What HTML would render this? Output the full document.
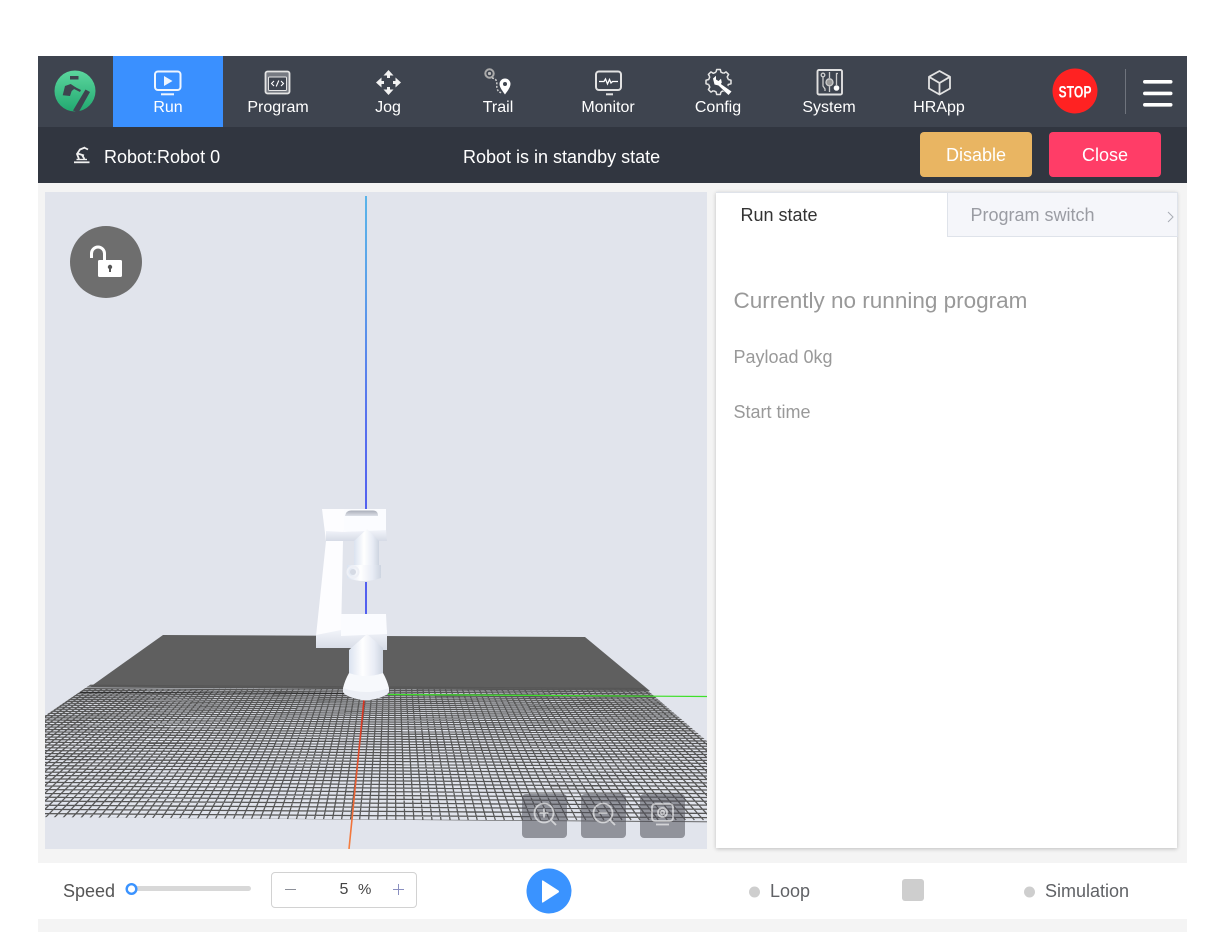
<!DOCTYPE html>
<html lang="en">
<head>
<meta charset="utf-8">
<title>Robot Run</title>
<style>
html,body{margin:0;padding:0;width:1208px;height:932px;overflow:hidden;background:#fff;font-family:"Liberation Sans",Arial,sans-serif}
.a{position:absolute}
.t{position:absolute;white-space:nowrap;line-height:24px;height:24px}
.nav{position:absolute;top:97.500px;width:110px;text-align:center;color:#fff;font-size:16px;line-height:20px}
svg{position:absolute;left:0;top:0}
</style>
</head>
<body>
<div class="a" style="left:38px;top:56px;width:1149px;height:876px;background:#f4f4f4"></div>
<div class="a" style="left:38px;top:56px;width:1149px;height:71px;background:#3e444f"></div>
<div class="a" style="left:113px;top:56px;width:110px;height:71px;background:#3a90ff"></div>
<div class="a" style="left:38px;top:127px;width:1149px;height:56px;background:#313640"></div>
<div class="a" style="left:45px;top:192px;width:662px;height:657px;background:#e1e4ec"></div>
<div class="a" style="left:716px;top:192px;width:461px;height:656px;background:#fff;box-shadow:0 1px 4px rgba(0,0,0,.22)"></div>
<div class="a" style="left:947px;top:192px;width:229px;height:43px;background:#f5f6fa;border:1px solid #dfe3ea"></div>
<div class="a" style="left:716px;top:192px;width:231px;height:1px;background:#dfe3ea"></div>
<div class="a" style="left:38px;top:863px;width:1149px;height:56px;background:#fff"></div>
<div class="a" style="left:920px;top:132px;width:112px;height:45px;border-radius:4px;background:#e9b562;color:#fff;font-size:18px;line-height:46px;text-align:center">Disable</div>
<div class="a" style="left:1049px;top:132px;width:112px;height:45px;border-radius:4px;background:#ff3d67;color:#fff;font-size:18px;line-height:46px;text-align:center">Close</div>
<div class="a" style="left:271px;top:872px;width:144px;height:34px;border:1px solid #d2d2d2;border-radius:4px"></div>

<svg width="1208" height="932" viewBox="0 0 1208 932" xmlns="http://www.w3.org/2000/svg">
<defs>
<clipPath id="view"><rect x="45" y="192" width="662" height="657"/></clipPath>
<clipPath id="floor"><polygon points="163,635 585,637 803,823 -102,816"/></clipPath>
<linearGradient id="zax" x1="0" y1="196" x2="0" y2="510" gradientUnits="userSpaceOnUse"><stop offset="0" stop-color="#38a8e8"/><stop offset=".3" stop-color="#3a8ee8"/><stop offset=".7" stop-color="#3555ee"/><stop offset="1" stop-color="#2f3ff0"/></linearGradient>
<linearGradient id="xax" x1="0" y1="700" x2="0" y2="849" gradientUnits="userSpaceOnUse"><stop offset="0" stop-color="#d83020"/><stop offset="1" stop-color="#f58040"/></linearGradient>
<linearGradient id="cyl" x1="0" x2="1" y1="0" y2="0"><stop offset="0" stop-color="#dbe3f0"/><stop offset=".4" stop-color="#fff"/><stop offset=".75" stop-color="#e8ecf5"/><stop offset="1" stop-color="#cdd4e0"/></linearGradient>
<linearGradient id="shade" x1="0" x2="0" y1="0" y2="1"><stop offset="0" stop-color="#f2f4fa"/><stop offset="1" stop-color="#d6dbe6"/></linearGradient>
<linearGradient id="hole" x1="0" x2="0" y1="0" y2="1"><stop offset="0" stop-color="#a9adb8"/><stop offset="1" stop-color="#dde0e8"/></linearGradient>
<linearGradient id="logo" x1="0" x2="0" y1="0" y2="1"><stop offset="0" stop-color="#5cd69e"/><stop offset="1" stop-color="#22a970"/></linearGradient>
<path id="tooth" d="M-2.500 -9.800L-1.800 -12.500H1.800L2.500 -9.800L5.160 -8.700" fill="none" stroke="#e6e6e6" stroke-width="1.500" stroke-linejoin="round"/>
</defs>

<!-- 3D scene -->
<g clip-path="url(#view)">
<line x1="366" y1="196" x2="366" y2="510" stroke="url(#zax)" stroke-width="1.6"/>
<polygon points="163,635 585,637 650,691 90,687" fill="#5f5f5f"/>
<g clip-path="url(#floor)"><path id="grid" fill="none" stroke="#565656" stroke-width="1.250" d=""/></g>
<path d="M80 692.500L345 693.500" stroke="#2e2e2e" stroke-width="1"/>
<path d="M388 694.500L707 696.500" stroke="#3fe02a" stroke-width="1.200"/>
<path d="M364 700L349 849" stroke="url(#xax)" stroke-width="1.600"/>
<line x1="366" y1="582" x2="366" y2="614" stroke="#2f3ff0" stroke-width="1.600"/>
<!-- robot: rear link -->
<polygon points="322,509 346,509 343,541 341,636 316,636 326,541" fill="#fdfdff"/>
<polygon points="316,635 341,630 352,630 387,630 387,650 383,650 349,648 316,648" fill="url(#shade)"/>
<polygon points="341,614 386,614 387,634 341,636" fill="#fbfcff"/>
<!-- head -->
<polygon points="344,509 386,509 386,531 344,532" fill="#fbfcff"/>
<polygon points="326,531 344,532 386,530 387,541 326,541" fill="url(#shade)"/>
<path d="M345 516Q346 510.500 351 510.500H373Q378 510.500 378 516Z" fill="url(#hole)"/>
<polygon points="354,541 367,529 379,541 379,567 354,567" fill="url(#cyl)"/>
<path d="M347 565H381V578Q364 584 347 578Z" fill="url(#cyl)"/>
<circle cx="353" cy="572" r="3" fill="#d5dae4"/>
<circle cx="353" cy="572" r="5.500" fill="none" stroke="#eef0f6" stroke-width="2"/>
<!-- base -->
<polygon points="349,650 367,634 383,648 383,682 349,682" fill="url(#cyl)"/>
<path d="M349 673Q366 679 383 673Q387 680 389 688V692Q385 698 366 700.500Q347 698 343 692V688Q345 680 349 673Z" fill="#f7f9fc"/>
<path d="M343 688Q366 696 389 688V692Q385 698 366 700.500Q347 698 343 692Z" fill="#eceff5"/>
</g>

<!-- view buttons -->
<rect x="522" y="794" width="45" height="44" rx="4" fill="#50505a" fill-opacity=".55"/>
<rect x="581" y="794" width="45" height="44" rx="4" fill="#50505a" fill-opacity=".55"/>
<rect x="640" y="794" width="45" height="44" rx="4" fill="#50505a" fill-opacity=".55"/>
<g fill="none" stroke="#fff" stroke-opacity=".6" stroke-width="1.800">
<circle cx="544" cy="813" r="9.500"/><path d="M551 820L556 825M539.500 813H548.500M544 808.500V817.500"/>
<circle cx="603" cy="813" r="9.500"/><path d="M610 820L615 825M598.500 813H607.500"/>
<rect x="652" y="804" width="21" height="17" rx="3"/><circle cx="662.500" cy="812.500" r="4.500"/><circle cx="662.500" cy="812.500" r="1.800"/><path d="M656 824.500H669"/>
</g>

<!-- lock -->
<circle cx="106" cy="262" r="36" fill="#6e6e6e"/>
<path d="M91.500 258V253.500A6.500 6.500 0 0 1 104.500 253.500V260" fill="none" stroke="#fff" stroke-width="3"/>
<rect x="98" y="260" width="24" height="17" rx="1.500" fill="#fff"/>
<circle cx="110" cy="267" r="2.200" fill="#555"/><rect x="109" y="267" width="2" height="5" fill="#555"/>

<!-- logo -->
<circle cx="75" cy="91" r="20.500" fill="url(#logo)"/>
<path d="M70 76H78.500V79.500H70Z" fill="#3e444f"/>
<path d="M65 86L70.700 84L76 87.500L71.700 91L70 96L62.700 95.300Z" fill="#3e444f"/>
<path d="M75 87L81 90L80 92L74 89Z" fill="#3e444f"/>
<path d="M85.500 89.500L90 92L78.500 112.500L73 110.500Z" fill="#3e444f"/>

<!-- Run -->
<g fill="none" stroke="#eef5ff" stroke-width="2">
<rect x="155" y="71.500" width="25.500" height="18.500" rx="3"/>
<path d="M161 94.300H174"/>
</g>
<path d="M164 76L172.500 81L164 86Z" fill="#eef5ff"/>

<!-- Program -->
<rect x="265.500" y="71.500" width="24" height="22" rx="2" fill="#767a82" stroke="#e4e4e4" stroke-width="1.800"/>
<rect x="268.500" y="77" width="18" height="13.500" rx="1" fill="#3e444f" stroke="#e4e4e4" stroke-width="1"/>
<path d="M274 81L271.500 83.500L274 86M281 81L283.500 83.500L281 86M278.800 80.500L276.200 86.500" fill="none" stroke="#fff" stroke-width="1.100"/>

<!-- Jog -->
<g fill="#f2f2f2">
<path d="M388.500 70L393.500 75.500H383.500Z"/><path d="M388.500 95L393.500 89.500H383.500Z"/>
<path d="M376 82.500L381.500 77.500V87.500Z"/><path d="M401 82.500L395.500 77.500V87.500Z"/>
<rect x="387" y="75" width="3" height="3"/><rect x="387" y="87" width="3" height="3"/>
<rect x="381" y="81" width="3" height="3"/><rect x="393" y="81" width="3" height="3"/>
</g>

<!-- Trail -->
<circle cx="489.500" cy="73.500" r="4.200" fill="none" stroke="#aaa" stroke-width="2"/>
<circle cx="489.500" cy="73.500" r="1.600" fill="#bbb"/>
<path d="M492 78C499 79 496 85 497 88C498 92 499 92 502 93" fill="none" stroke="#ccc" stroke-width="1.500" stroke-dasharray="2 1.500"/>
<path d="M505 78.500A5.500 5.500 0 0 1 510.500 84C510.500 87.500 507 91.500 505 94.500C503 91.500 499.500 87.500 499.500 84A5.500 5.500 0 0 1 505 78.500Z" fill="#fff"/>
<circle cx="505" cy="84" r="2" fill="#3e444f"/>

<!-- Monitor -->
<g fill="none" stroke="#e2e2e2" stroke-width="2">
<rect x="596" y="71.500" width="25" height="18.500" rx="3"/>
<path d="M606 94.300H613"/>
</g>
<path d="M599 81.500H604L605.500 79L607.500 84L609.500 79.500L611 83L612.500 81.500H618" fill="none" stroke="#fff" stroke-width="1.300"/>

<!-- Config -->
<g transform="translate(718.500 82)">
<use href="#tooth"/><use href="#tooth" transform="rotate(45)"/><use href="#tooth" transform="rotate(90)"/><use href="#tooth" transform="rotate(135)"/><use href="#tooth" transform="rotate(180)"/><use href="#tooth" transform="rotate(225)"/><use href="#tooth" transform="rotate(270)"/><use href="#tooth" transform="rotate(315)"/>
</g>
<path d="M719 82L731 93.500" stroke="#3e444f" stroke-width="6.500"/>
<path d="M713 78.500L716 75.800L716 79.500L718.500 81L721 78.800L721.800 82.500L720.800 84L731.500 91.500L728.500 95L718.500 85.500L714.500 84.500Z" fill="#fff"/>

<!-- System -->
<rect x="817.500" y="70" width="24.500" height="24.500" rx="1.500" fill="#3e444f" stroke="#e0e0e0" stroke-width="1.900"/>
<g fill="none" stroke="#ccc" stroke-width="1.300">
<circle cx="823" cy="75" r="1.800"/><path d="M823 77V86L825 89V91"/>
<path d="M829.500 72V78M829.500 86.500V92"/><circle cx="829.500" cy="82.300" r="3.500" fill="#999"/>
<path d="M838 73.500H836.500V85"/>
</g>
<circle cx="836.500" cy="88" r="2.800" fill="#fff"/>

<!-- HRApp -->
<path d="M939.500 71L950 76.800V88.500L939.500 94.500L929 88.500V76.800ZM929 76.800L939.500 83L950 76.800M939.500 83V94.500" fill="none" stroke="#e2e2e2" stroke-width="1.800" stroke-linejoin="round"/>

<!-- Stop -->
<circle cx="1075" cy="91" r="22.500" fill="#ff2222"/>
<text x="1075" y="97.500" text-anchor="middle" font-family="'Liberation Sans',sans-serif" font-size="17" font-weight="700" fill="#fff" textLength="33" lengthAdjust="spacingAndGlyphs">STOP</text>
<rect x="1125" y="69" width="1" height="45" fill="#6f747d"/>
<rect x="1143" y="80" width="29.500" height="3.600" rx="1.800" fill="#fff"/>
<rect x="1143" y="91.600" width="29.500" height="3.600" rx="1.800" fill="#fff"/>
<rect x="1143" y="103" width="29.500" height="3.600" rx="1.800" fill="#fff"/>

<!-- robot glyph -->
<g fill="none" stroke="#f0f0f0" stroke-width="1.800">
<path d="M74 162.300H89.500"/>
<path d="M76.500 159.500H87" stroke-width="1.400"/>
<path d="M79 159L77 154L80 149.500L85 147.500M82 155L84.500 159M77.500 153.500L84 155.500"/>
<path d="M84 147.500L88 149.500"/>
</g>

<!-- tab chevron -->
<path d="M1168 212L1173 217L1168 222" fill="none" stroke="#a8acb4" stroke-width="1"/>

<!-- speed -->
<rect x="131" y="886" width="120" height="5" rx="2.500" fill="#d8d8d8"/>
<circle cx="131.500" cy="889" r="4.800" fill="#fff" stroke="#3a93ff" stroke-width="2.400"/>
<path d="M285 889.500H296" stroke="#8d9099" stroke-width="1"/>
<path d="M393 889.500H404M398.500 884V895" stroke="#8a8fc0" stroke-width="1"/>

<!-- play -->
<circle cx="549" cy="891" r="22.500" fill="#3a93ff"/>
<path d="M543 880.500L558.500 890.500Q559.500 891.500 558.500 892.500L543 902.500Q542 903 542 902V881Q542 880 543 880.500Z" fill="#fff"/>

<circle cx="754.500" cy="892" r="5.500" fill="#cecece"/>
<rect x="902" y="879" width="22" height="22" rx="3" fill="#cecece"/>
<circle cx="1029.500" cy="892" r="5.500" fill="#cecece"/>
</svg>

<div class="nav" style="left:113px">Run</div>
<div class="nav" style="left:223px">Program</div>
<div class="nav" style="left:333px">Jog</div>
<div class="nav" style="left:443px">Trail</div>
<div class="nav" style="left:553px">Monitor</div>
<div class="nav" style="left:663px">Config</div>
<div class="nav" style="left:774px">System</div>
<div class="nav" style="left:884px">HRApp</div>

<div class="t" style="left:104px;top:145px;color:#fff;font-size:18px">Robot:Robot 0</div>
<div class="t" style="left:463px;top:145px;color:#fff;font-size:18px">Robot is in standby state</div>

<div class="t" style="left:740.500px;top:203px;color:#333;font-size:18px">Run state</div>
<div class="t" style="left:970.500px;top:203px;color:#9a9ca3;font-size:18px">Program switch</div>
<div class="t" style="left:733.500px;top:289px;color:#999;font-size:22.500px">Currently no running program</div>
<div class="t" style="left:733.500px;top:345px;color:#999;font-size:18px">Payload 0kg</div>
<div class="t" style="left:733.500px;top:400px;color:#999;font-size:18px">Start time</div>

<div class="t" style="left:63px;top:879px;color:#555;font-size:18px">Speed</div>
<div class="t" style="left:339.500px;top:877.500px;color:#444;font-size:16px">5</div>
<div class="t" style="left:358px;top:877.500px;color:#444;font-size:15px">%</div>
<div class="t" style="left:770px;top:879px;color:#606266;font-size:18px">Loop</div>
<div class="t" style="left:1045px;top:879px;color:#606266;font-size:18px">Simulation</div>

<script>
(function(){
var vx=393,vy=473,d='',i,k=(689-473)/347;
for(i=0;i<=100;i++){var xb=-102+9.05*i;d+='M'+(vx+(xb-vx)*k).toFixed(1)+' 689L'+xb.toFixed(1)+' 820';}
var a=1/162,b=1/347,n=90;
for(i=0;i<=n;i++){
  var y=vy+1/(a-(a-b)*i/n);
  if(y<686)continue;
  d+='M-200 '+(y-3.5).toFixed(1)+'L900 '+(y+3.1).toFixed(1);
}
document.getElementById('grid').setAttribute('d',d);
})();
</script>
</body>
</html>
